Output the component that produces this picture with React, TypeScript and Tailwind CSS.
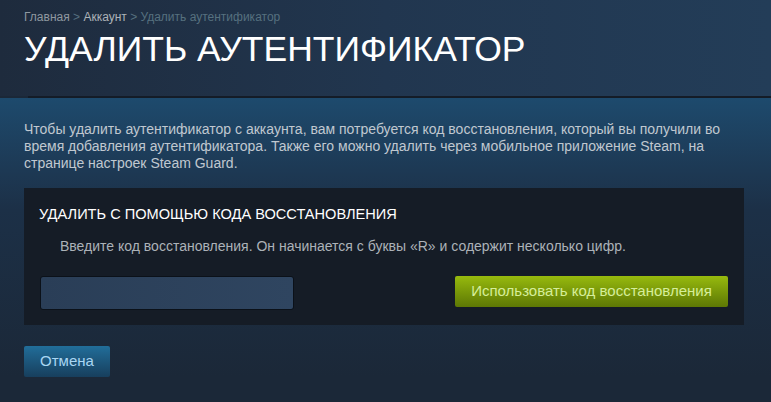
import React from "react";

export default function App() {
  return (
    <div className="w-[771px] h-[402px] overflow-hidden bg-[#1b2838] font-['Liberation_Sans',Arial,sans-serif]">
      <div className="h-[96px] bg-gradient-to-r from-[#1e2b3d] via-[#21364f] to-[#233d58] px-6 pt-[10px]">
        <div className="text-[12px] leading-[15px] text-[#8f98a0]">
          <span>Главная</span>
          <span className="text-[#56707f]"> &gt; </span>
          <span className="text-[#acb2b8]">Аккаунт</span>
          <span className="text-[#56707f]"> &gt; Удалить аутентификатор</span>
        </div>
        <h1 className="mt-[3px] text-[35.5px] leading-[42px] text-white">УДАЛИТЬ АУТЕНТИФИКАТОР</h1>
      </div>
      <div className="h-[2px] ml-[28px] bg-[#141c27]" />
      <div className="bg-gradient-to-b from-[#1d4a6d] via-[#1c3047] via-40% to-[#1b2838] pl-6 pr-[27px] pt-[23px]">
        <p className="text-[14px] leading-[17px] text-[#c0c8d0]">
          Чтобы удалить аутентификатор с аккаунта, вам потребуется код восстановления, который вы получили во время добавления аутентификатора. Также его можно удалить через мобильное приложение Steam, на странице настроек Steam Guard.
        </p>
        <div className="mt-[16px] bg-[#151c26] pl-[15px] pr-[16px] pt-[17px] pb-[15px]">
          <div className="text-[14.6px] leading-[18px] text-white">УДАЛИТЬ С ПОМОЩЬЮ КОДА ВОССТАНОВЛЕНИЯ</div>
          <div className="mt-[15px] pl-[21px] text-[14px] leading-[17px] text-[#acb2b8]">
            Введите код восстановления. Он начинается с буквы «R» и содержит несколько цифр.
          </div>
          <div className="mt-[21px] flex items-start justify-between">
            <input
              className="ml-[1px] w-[254px] h-[34px] rounded-[3px] border border-[#0b1119] bg-gradient-to-r from-[#2a3e57] to-[#2f4560] outline-none"
              type="text"
            />
            <button className="h-[31px] w-[273px] rounded-[2px] bg-gradient-to-b from-[#97ba0e] to-[#5d7805] text-[15px] text-[#d6ee9a]">
              Использовать код восстановления
            </button>
          </div>
        </div>
        <button className="mt-[21px] h-[31px] w-[86px] rounded-[2px] bg-gradient-to-b from-[#216e9a] to-[#173f5d] text-[15px] text-[#a9d6f3]">
          Отмена
        </button>
      </div>
    </div>
  );
}
